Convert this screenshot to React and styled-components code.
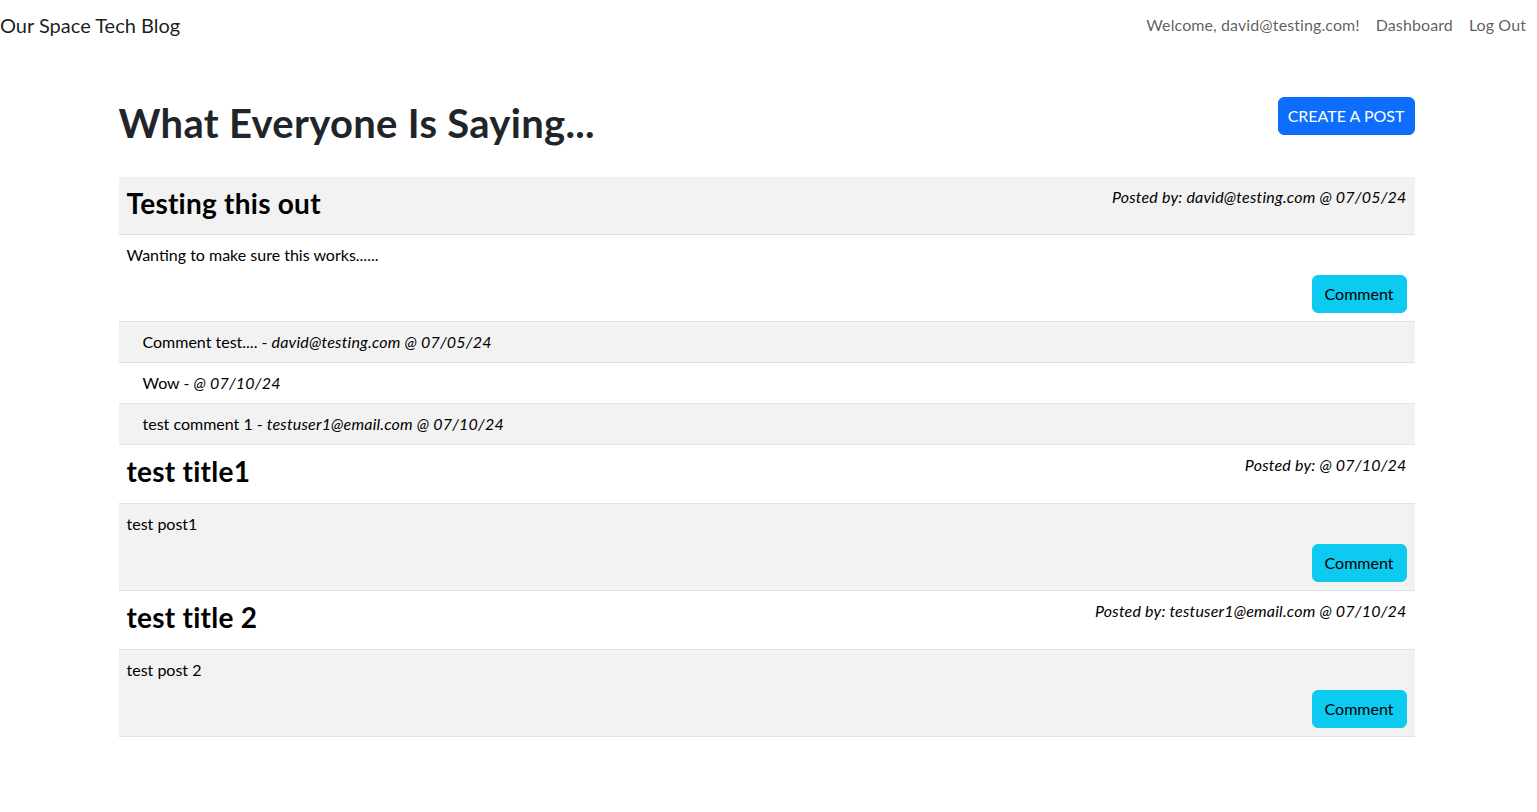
import React from 'react';
import styled, { createGlobalStyle } from 'styled-components';

const GlobalStyle = createGlobalStyle`
  * {
    box-sizing: border-box;
  }
  body {
    margin: 0;
    background: #fff;
    color: #212529;
    font-family: 'Segoe UI', Lato, 'Noto Sans', sans-serif;
    font-size: 16px;
    line-height: 1.5;
  }
`;

const Navbar = styled.nav`
  height: 56px;
  display: flex;
  align-items: center;
  justify-content: space-between;
  padding: 0 3px 6px 0;
`;

const Brand = styled.a`
  font-size: 20px;
  line-height: 30px;
  color: rgba(0, 0, 0, 0.9);
  text-decoration: none;
`;

const NavLinks = styled.div`
  display: flex;
  align-items: center;
`;

const NavLink = styled.a`
  padding: 8px;
  color: rgba(0, 0, 0, 0.65);
  text-decoration: none;
  font-size: 16px;
  letter-spacing: 0.1px;
`;

const Container = styled.main`
  width: 1296px;
  margin: 0 auto;
  transform: translateX(-2px);
`;

const HeadRow = styled.div`
  display: flex;
  justify-content: space-between;
  align-items: flex-start;
  margin-top: 41px;
`;

const PageTitle = styled.h1`
  margin: 2px 0 0;
  font-size: 40px;
  line-height: 48px;
  font-weight: 700;
  letter-spacing: 0.3px;
  color: #212529;
`;

const Button = styled.button`
  font-family: inherit;
  font-size: 16px;
  line-height: 24px;
  height: 38px;
  padding: ${(p) => (p.$variant === 'primary' ? '6px 9px' : '6px 12px')};
  border-radius: 6px;
  border: 1px solid ${(p) => (p.$variant === 'primary' ? '#0d6efd' : '#0dcaf0')};
  background: ${(p) => (p.$variant === 'primary' ? '#0d6efd' : '#0dcaf0')};
  color: ${(p) => (p.$variant === 'primary' ? '#fff' : '#000')};
  cursor: pointer;
`;

const Table = styled.div`
  margin-top: 30px;
`;

const Row = styled.div`
  background: ${(p) => (p.$striped ? '#f2f2f2' : '#fff')};
  border-bottom: 1px solid #dee2e6;
  padding: 8px;
  color: #000;
`;

const TitleCell = styled.div`
  display: flex;
  justify-content: space-between;
  align-items: flex-start;
  min-height: ${(p) => (p.$first ? '41px' : '42px')};
`;

const PostTitle = styled.h3`
  margin: 0;
  font-size: 28px;
  line-height: 36px;
  font-weight: 700;
  letter-spacing: 0.25px;
  color: #000;
`;

const Meta = styled.em`
  font-style: italic;
  line-height: 24px;
  letter-spacing: 0.2px;
`;

const BodyCell = styled.div`
  display: flex;
  flex-direction: column;
  gap: 8px;
`;

const Actions = styled.div`
  display: flex;
  justify-content: flex-end;
`;

const CommentLine = styled.div`
  line-height: 24px;
  padding-left: 16px;
`;

const posts = [
  {
    title: 'Testing this out',
    author: 'david@testing.com',
    date: '07/05/24',
    body: 'Wanting to make sure this works......',
    comments: [
      { text: 'Comment test....', author: 'david@testing.com', date: '07/05/24' },
      { text: 'Wow', author: '', date: '07/10/24' },
      { text: 'test comment 1', author: 'testuser1@email.com', date: '07/10/24' },
    ],
  },
  { title: 'test title1', author: '', date: '07/10/24', body: 'test post1', comments: [] },
  {
    title: 'test title 2',
    author: 'testuser1@email.com',
    date: '07/10/24',
    body: 'test post 2',
    comments: [],
  },
];

const App = () => {
  let rowIndex = 0;
  const rows = [];
  posts.forEach((post, i) => {
    rows.push(
      <Row key={`t${i}`} $striped={rowIndex++ % 2 === 0}>
        <TitleCell $first={i === 0}>
          <PostTitle>{post.title}</PostTitle>
          <Meta>
            Posted by: {post.author} @ {post.date}
          </Meta>
        </TitleCell>
      </Row>
    );
    rows.push(
      <Row key={`b${i}`} $striped={rowIndex++ % 2 === 0}>
        <BodyCell>
          <div>{post.body}</div>
          <Actions>
            <Button>Comment</Button>
          </Actions>
        </BodyCell>
      </Row>
    );
    post.comments.forEach((c, j) => {
      rows.push(
        <Row key={`c${i}-${j}`} $striped={rowIndex++ % 2 === 0}>
          <CommentLine>
            {c.text} - <Meta>{c.author} @ {c.date}</Meta>
          </CommentLine>
        </Row>
      );
    });
  });

  return (
    <>
      <GlobalStyle />
      <Navbar>
        <Brand href="#">Our Space Tech Blog</Brand>
        <NavLinks>
          <NavLink href="#">Welcome, david@testing.com!</NavLink>
          <NavLink href="#">Dashboard</NavLink>
          <NavLink href="#">Log Out</NavLink>
        </NavLinks>
      </Navbar>
      <Container>
        <HeadRow>
          <PageTitle>What Everyone Is Saying...</PageTitle>
          <Button $variant="primary">CREATE A POST</Button>
        </HeadRow>
        <Table>{rows}</Table>
      </Container>
    </>
  );
};

export default App;
